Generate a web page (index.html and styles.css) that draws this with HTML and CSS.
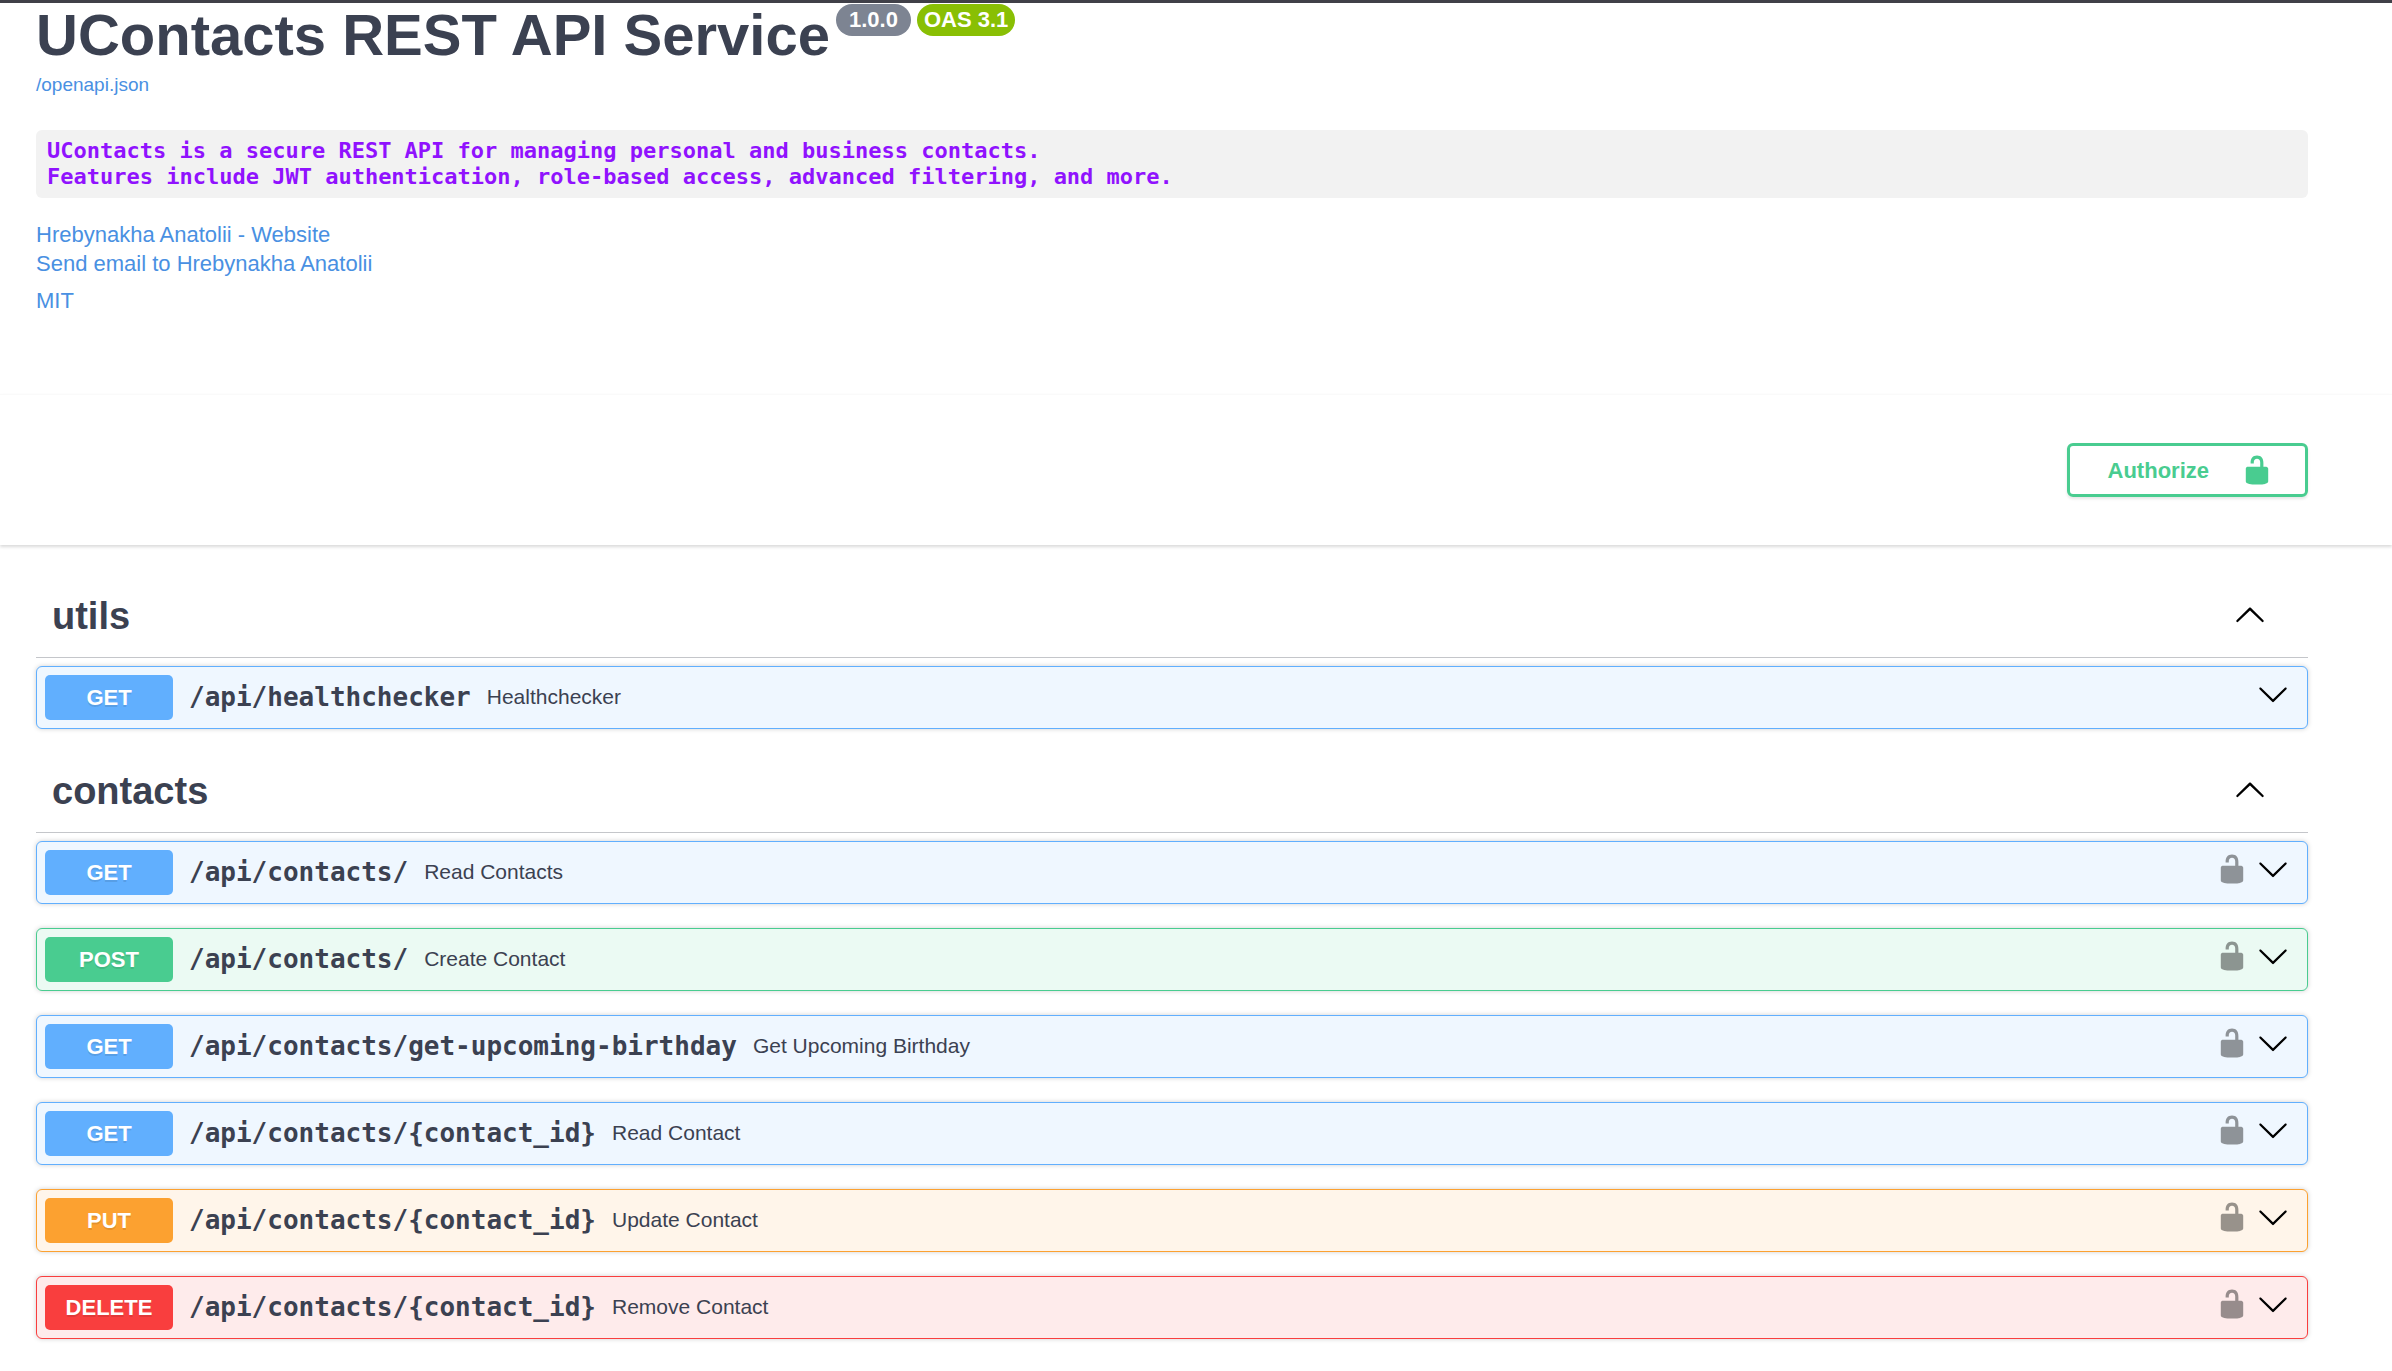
FILE: index.html
```html
<!DOCTYPE html>
<html lang="en">
<head>
<meta charset="utf-8">
<title>UContacts REST API Service</title>
<link rel="stylesheet" href="styles.css">
</head>
<body>
<svg class="sprite" aria-hidden="true">
  <symbol id="unlocked" viewBox="0 0 20 20"><path d="M15.8 8H14V5.6C14 2.703 12.665 1 10 1 7.334 1 6 2.703 6 5.6V6h2v-.801C8 3.754 8.797 3 10 3c1.203 0 2 .754 2 2.199V8H4c-.553 0-1 .646-1 1.199V17c0 .549.428 1.139.951 1.307l1.197.387C5.672 18.861 6.55 19 7.1 19h5.8c.549 0 1.428-.139 1.951-.307l1.196-.387c.524-.167.953-.757.953-1.306V9.199C17 8.646 16.352 8 15.8 8z"/></symbol>
  <symbol id="arrow-up" viewBox="0 0 20 20"><path d="M17.418 14.908c.272.268.709.268.979 0s.271-.701 0-.969l-7.908-7.83c-.27-.268-.707-.268-.979 0l-7.908 7.83c-.27.268-.27.701 0 .969.271.268.709.268.979 0L10 7.767l7.418 7.141z"/></symbol>
  <symbol id="arrow-down" viewBox="0 0 20 20"><path d="M17.418 6.109c.272-.268.709-.268.979 0s.271.701 0 .969l-7.908 7.83c-.27.268-.707.268-.979 0l-7.908-7.83c-.27-.268-.27-.701 0-.969.271-.268.709-.268.979 0L10 13.25l7.418-7.141z"/></symbol>
</svg>

<header class="info wrapper">
  <div class="title-row">
    <h1 class="title">UContacts REST API Service</h1>
    <span class="badge version">1.0.0</span>
    <span class="badge oas">OAS 3.1</span>
  </div>
  <a class="spec-link" href="/openapi.json">/openapi.json</a>
  <pre class="description"><code>UContacts is a secure REST API for managing personal and business contacts.
Features include JWT authentication, role-based access, advanced filtering, and more.</code></pre>
  <div class="contact">
    <a href="#website">Hrebynakha Anatolii - Website</a>
    <a href="#email">Send email to Hrebynakha Anatolii</a>
  </div>
  <div class="license"><a href="#license">MIT</a></div>
</header>

<section class="scheme">
  <div class="wrapper scheme-inner">
    <button class="authorize" type="button"><span>Authorize</span><svg class="icon"><use href="#unlocked"/></svg></button>
  </div>
</section>

<main class="wrapper operations">
  <section class="tag-section">
    <div class="tag-header">
      <h2 class="tag">utils</h2>
      <button class="icon-button" type="button" aria-label="Collapse utils"><svg class="icon"><use href="#arrow-up"/></svg></button>
    </div>
    <div class="operation get">
      <button class="summary" type="button"><span class="method">GET</span><span class="path">/api/healthchecker</span><span class="text">Healthchecker</span></button>
      <div class="controls">
        <button class="icon-button" type="button" aria-label="Expand"><svg class="icon"><use href="#arrow-down"/></svg></button>
      </div>
    </div>
  </section>

  <section class="tag-section">
    <div class="tag-header">
      <h2 class="tag">contacts</h2>
      <button class="icon-button" type="button" aria-label="Collapse contacts"><svg class="icon"><use href="#arrow-up"/></svg></button>
    </div>
    <div class="operation get">
      <button class="summary" type="button"><span class="method">GET</span><span class="path">/api/contacts/</span><span class="text">Read Contacts</span></button>
      <div class="controls">
        <button class="icon-button lock" type="button" aria-label="Authorization"><svg class="icon"><use href="#unlocked"/></svg></button>
        <button class="icon-button" type="button" aria-label="Expand"><svg class="icon"><use href="#arrow-down"/></svg></button>
      </div>
    </div>
    <div class="operation post">
      <button class="summary" type="button"><span class="method">POST</span><span class="path">/api/contacts/</span><span class="text">Create Contact</span></button>
      <div class="controls">
        <button class="icon-button lock" type="button" aria-label="Authorization"><svg class="icon"><use href="#unlocked"/></svg></button>
        <button class="icon-button" type="button" aria-label="Expand"><svg class="icon"><use href="#arrow-down"/></svg></button>
      </div>
    </div>
    <div class="operation get">
      <button class="summary" type="button"><span class="method">GET</span><span class="path">/api/contacts/get-upcoming-birthday</span><span class="text">Get Upcoming Birthday</span></button>
      <div class="controls">
        <button class="icon-button lock" type="button" aria-label="Authorization"><svg class="icon"><use href="#unlocked"/></svg></button>
        <button class="icon-button" type="button" aria-label="Expand"><svg class="icon"><use href="#arrow-down"/></svg></button>
      </div>
    </div>
    <div class="operation get">
      <button class="summary" type="button"><span class="method">GET</span><span class="path">/api/contacts/{contact_id}</span><span class="text">Read Contact</span></button>
      <div class="controls">
        <button class="icon-button lock" type="button" aria-label="Authorization"><svg class="icon"><use href="#unlocked"/></svg></button>
        <button class="icon-button" type="button" aria-label="Expand"><svg class="icon"><use href="#arrow-down"/></svg></button>
      </div>
    </div>
    <div class="operation put">
      <button class="summary" type="button"><span class="method">PUT</span><span class="path">/api/contacts/{contact_id}</span><span class="text">Update Contact</span></button>
      <div class="controls">
        <button class="icon-button lock" type="button" aria-label="Authorization"><svg class="icon"><use href="#unlocked"/></svg></button>
        <button class="icon-button" type="button" aria-label="Expand"><svg class="icon"><use href="#arrow-down"/></svg></button>
      </div>
    </div>
    <div class="operation delete">
      <button class="summary" type="button"><span class="method">DELETE</span><span class="path">/api/contacts/{contact_id}</span><span class="text">Remove Contact</span></button>
      <div class="controls">
        <button class="icon-button lock" type="button" aria-label="Authorization"><svg class="icon"><use href="#unlocked"/></svg></button>
        <button class="icon-button" type="button" aria-label="Expand"><svg class="icon"><use href="#arrow-down"/></svg></button>
      </div>
    </div>
  </section>
</main>
</body>
</html>
```
FILE: styles.css
```css
* {
  box-sizing: border-box;
}

body {
  margin: 0;
  border-top: 3px solid #404048;
  background: #fff;
  color: #3b4151;
  font-family: "Liberation Sans", Arial, sans-serif;
  font-size: 22px;
}

button {
  margin: 0;
  padding: 0;
  border: 0;
  background: none;
  color: inherit;
  font: inherit;
  cursor: pointer;
}

a {
  color: #4990e2;
  text-decoration: none;
}

.sprite {
  display: none;
}

.icon {
  display: block;
  width: 32px;
  height: 32px;
  fill: currentColor;
}

.wrapper {
  padding: 0 84px 0 36px;
}

/* API information */
.info {
  padding-bottom: 79px;
}

.title-row {
  display: flex;
  align-items: flex-start;
  gap: 6px;
}

.title {
  margin: 0;
  font-size: 58px;
  line-height: 64px;
}

.badge {
  margin-top: 1px;
  border-radius: 16px;
  color: #fff;
  font-weight: 700;
  line-height: 32px;
}

.version {
  padding: 0 13px;
  background: #7d8492;
}

.oas {
  padding: 0 7px;
  background: #89bf04;
}

.spec-link {
  display: block;
  width: fit-content;
  margin-top: 6px;
  font-size: 19px;
  line-height: 24px;
}

.description {
  margin: 33px 0 22px;
  padding: 8px 11px;
  border-radius: 6px;
  background: #f2f2f2;
  color: #9012fe;
  font: 700 22px/26px "DejaVu Sans Mono", monospace;
}

.description code {
  font: inherit;
}

.contact a,
.license a {
  display: block;
  width: fit-content;
  line-height: 29px;
}

.license {
  margin-top: 8px;
}

/* Authorization bar */
.scheme {
  padding: 48px 0;
  border-top: 1px solid #fafafa;
  background: #fff;
  box-shadow: 0 2px 3px rgba(0, 0, 0, 0.15);
}

.scheme-inner {
  display: flex;
  justify-content: flex-end;
}

.authorize {
  display: flex;
  align-items: center;
  gap: 32px;
  height: 54px;
  padding: 0 32px 0 38px;
  border: 3px solid #49cc90;
  border-radius: 6px;
  box-shadow: 0 2px 3px rgba(0, 0, 0, 0.1);
  color: #49cc90;
  font-weight: 700;
}

.authorize span {
  padding-top: 2px;
}

/* Operations */
.operations {
  padding-top: 33px;
}

.tag-header {
  display: flex;
  align-items: center;
  justify-content: space-between;
  height: 80px;
  margin-bottom: 8px;
  padding: 0 42px 4px 16px;
  border-bottom: 1px solid rgba(59, 65, 81, 0.3);
}

.tag-header .icon-button {
  padding-bottom: 4px;
}

.tag {
  margin: 0;
  font-size: 38px;
  line-height: 44px;
}

.icon-button {
  color: #000;
}

.operation {
  display: flex;
  margin-bottom: 24px;
  border: 1px solid;
  border-radius: 6px;
  box-shadow: 0 0 5px rgba(0, 0, 0, 0.19);
}

.summary {
  display: flex;
  flex: 1;
  align-items: center;
  gap: 16px;
  padding: 8px;
  text-align: left;
}

.method {
  width: 128px;
  border-radius: 5px;
  color: #fff;
  font-weight: 700;
  line-height: 45px;
  text-align: center;
  text-shadow: 0 2px 0 rgba(0, 0, 0, 0.1);
}

.path {
  padding-bottom: 1px;
  font: 700 26px/30px "DejaVu Sans Mono", monospace;
}

.text {
  padding-bottom: 1px;
  font-size: 21px;
}

.controls {
  display: flex;
  align-items: center;
  gap: 9px;
  padding: 0 18px 7px 0;
}

.lock {
  opacity: 0.4;
}

.get {
  border-color: #61affe;
  background: #eff7ff;
}

.get .method {
  background: #61affe;
}

.post {
  border-color: #49cc90;
  background: #ebfaf3;
}

.post .method {
  background: #49cc90;
}

.put {
  border-color: #fca130;
  background: #fff5ea;
}

.put .method {
  background: #fca130;
}

.delete {
  border-color: #f93e3e;
  background: #feebeb;
}

.delete .method {
  background: #f93e3e;
}
```
